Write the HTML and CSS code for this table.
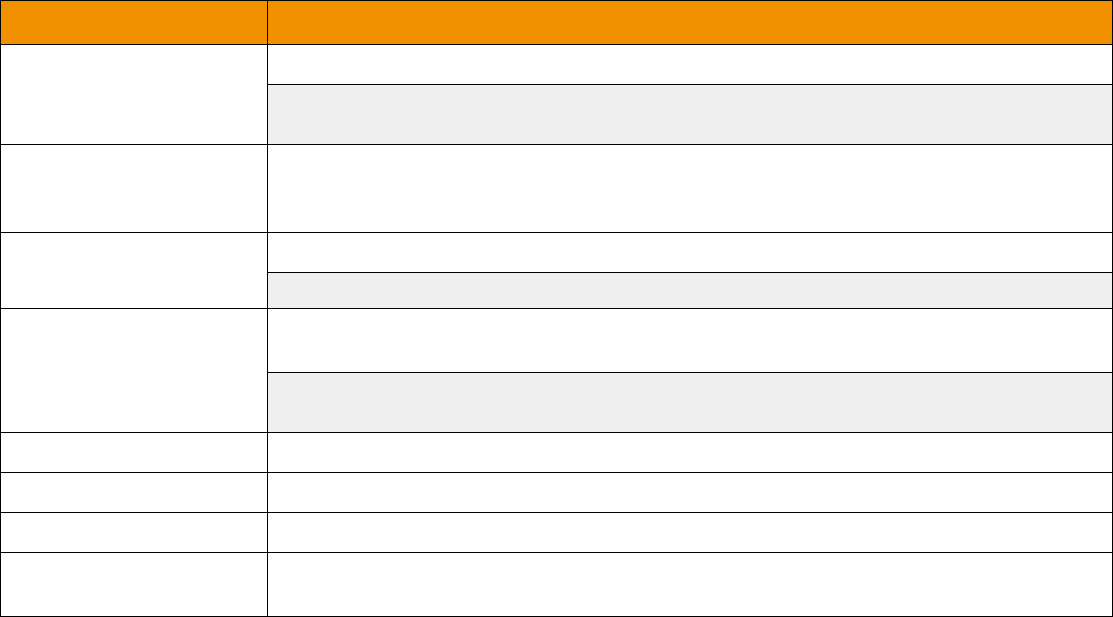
FILE: index.html
```html
<!DOCTYPE html>
<html lang="en">
<head>
<meta charset="utf-8">
<title>Table</title>
<link rel="stylesheet" href="styles.css">
</head>
<body>
<div class="grid-table">
  <div class="cell head left"></div>
  <div class="cell head right"></div>

  <div class="cell left span2"></div>
  <div class="cell right"></div>
  <div class="cell right alt"></div>

  <div class="cell left"></div>
  <div class="cell right"></div>

  <div class="cell left span2"></div>
  <div class="cell right"></div>
  <div class="cell right alt"></div>

  <div class="cell left span2"></div>
  <div class="cell right"></div>
  <div class="cell right alt"></div>

  <div class="cell left"></div>
  <div class="cell right"></div>

  <div class="cell left"></div>
  <div class="cell right"></div>

  <div class="cell left"></div>
  <div class="cell right"></div>

  <div class="cell left"></div>
  <div class="cell right"></div>
</div>
</body>
</html>
```

FILE: styles.css
```css
html, body {
  margin: 0;
  padding: 0;
  background: #ffffff;
  font-family: "Liberation Sans", Arial, sans-serif;
}

.grid-table {
  width: 1113px;
  box-sizing: border-box;
  display: grid;
  grid-template-columns: 267px 845px;
  grid-template-rows: 44px 40px 60px 88px 40px 36px 64px 60px 40px 40px 40px 64px;
  border-top: 1px solid #000000;
  border-left: 1px solid #000000;
}

.cell {
  box-sizing: border-box;
  border-right: 1px solid #000000;
  border-bottom: 1px solid #000000;
  background: #ffffff;
}

.left {
  grid-column: 1;
}

.right {
  grid-column: 2;
}

.span2 {
  grid-row: span 2;
}

.head {
  background: #f19100;
}

.alt {
  background: #efefef;
}
```
